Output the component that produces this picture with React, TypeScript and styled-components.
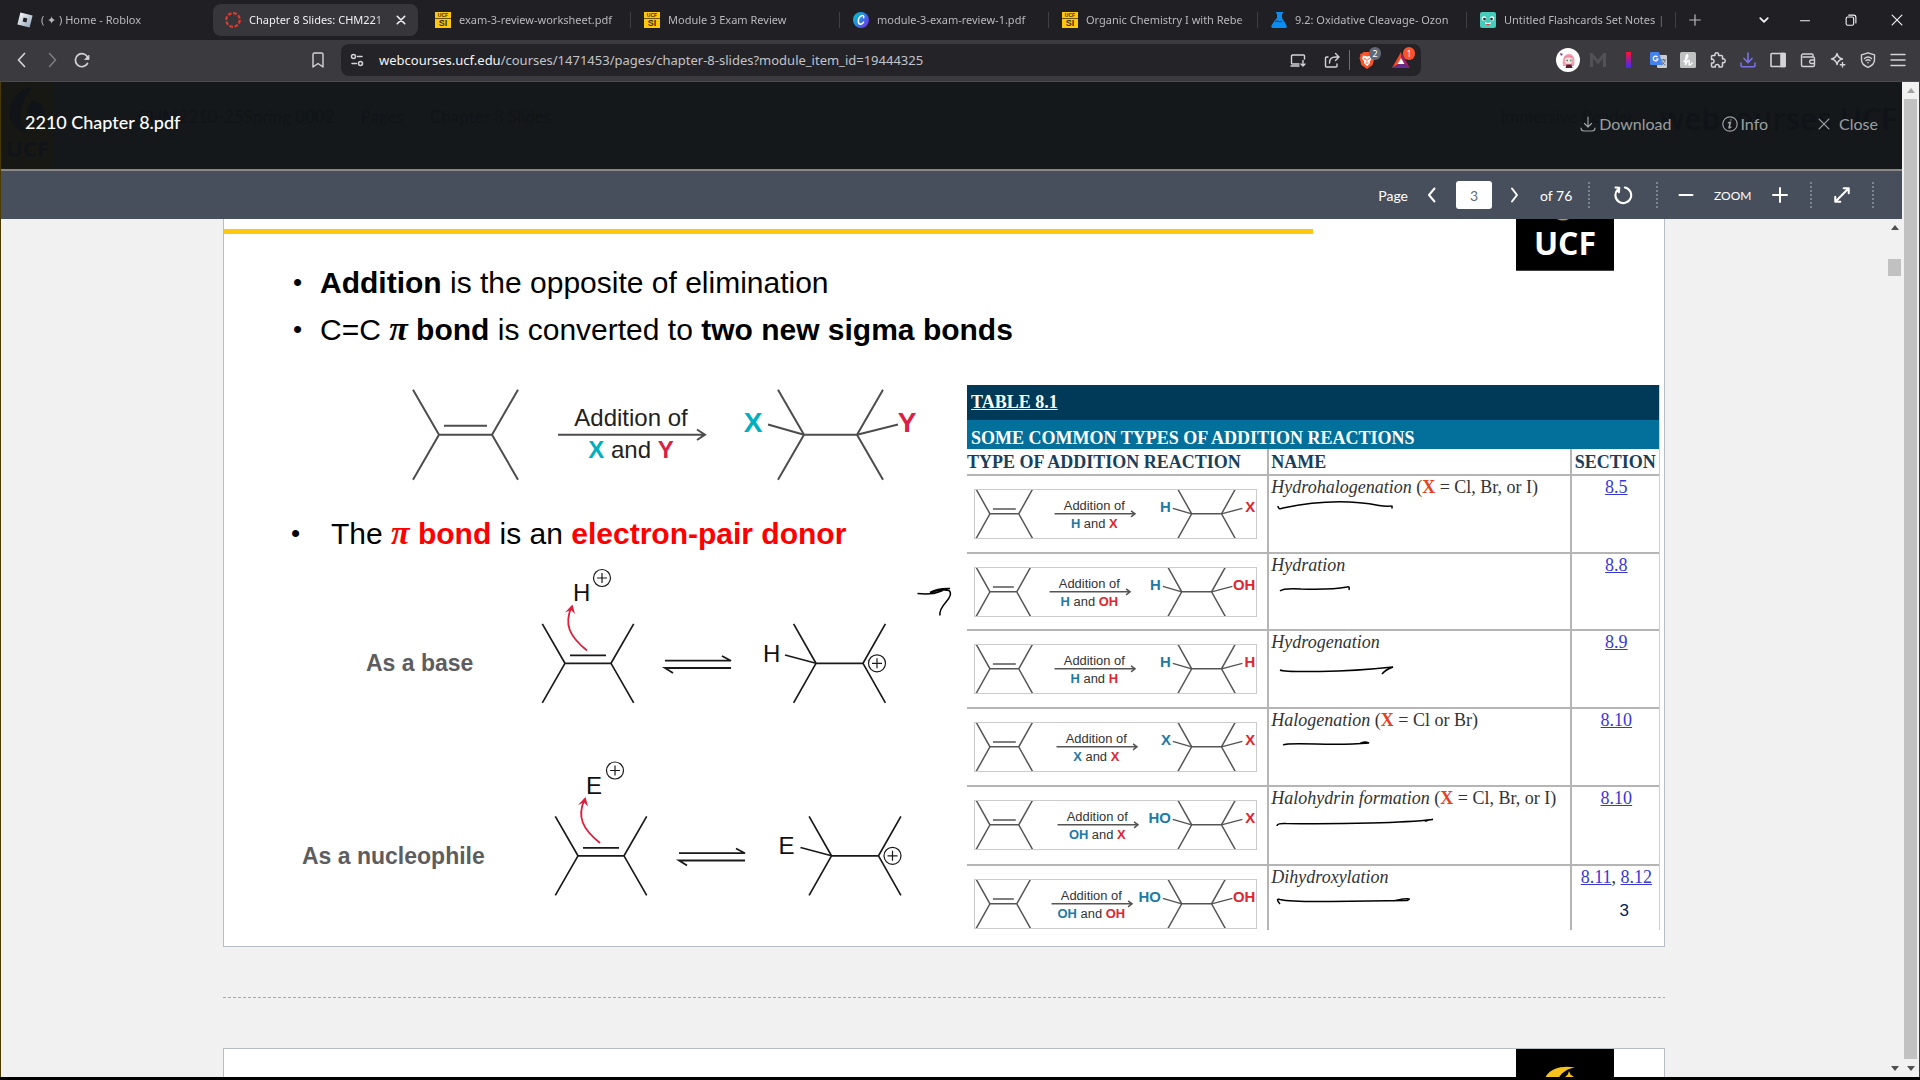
import React from "react";
import styled, { createGlobalStyle } from "styled-components";

const GlobalStyle = createGlobalStyle`
  * { box-sizing: border-box; }
  body { margin: 0; background: #000; overflow: hidden; }
  button { font: inherit; color: inherit; background: none; border: 0; padding: 0; cursor: pointer; }
  svg { display: block; flex: none; }
`;

const chromeFont = `"Noto Sans", "Open Sans", sans-serif`;
const slideFont = `"Liberation Sans", Arial, sans-serif`;
const serifFont = `"Liberation Serif", Georgia, serif`;

const Window = styled.div`
  height: 100vh;
  display: flex;
  flex-direction: column;
  font-family: ${chromeFont};
  background: #000;
`;

/* ---------- tab strip ---------- */

const TabStrip = styled.header`
  display: flex;
  align-items: center;
  flex: none;
  height: 40px;
  padding: 0 0 0 4px;
  background: #1f1f24;
  color: #b9b9bd;
  font-size: 11px;
`;

const TabSlot = styled.div<{ $line: boolean }>`
  flex: 0 1 209px;
  min-width: 0;
  padding-right: 3px;
  border-right: 1px solid ${(p) => (p.$line ? "#3f3f45" : "transparent")};
  height: 16px;
  display: flex;
  align-items: center;
`;

const TabButton = styled.button<{ $active: boolean }>`
  flex: 1;
  min-width: 0;
  height: 32px;
  padding: ${(p) => (p.$active ? "0 12px" : "0 4px 0 13px")};
  display: flex;
  align-items: center;
  gap: 8px;
  border-radius: 8px;
  text-align: left;
  background: ${(p) => (p.$active ? "#36363b" : "transparent")};
  color: ${(p) => (p.$active ? "#f1f1f3" : "#b9b9bd")};
`;

const TabTitle = styled.span`
  flex: 1;
  min-width: 0;
  white-space: nowrap;
  overflow: hidden;
  line-height: 16px;
  mask-image: linear-gradient(to right, #000 calc(100% - 12px), transparent 100%);
`;

const NewTab = styled.button`
  width: 38px;
  display: grid;
  place-items: center;
`;

const WindowControls = styled.div`
  margin-left: auto;
  display: flex;
  color: #f1f1f3;
`;

const WindowButton = styled.button<{ $w: number }>`
  width: ${(p) => p.$w}px;
  height: 40px;
  display: grid;
  place-items: center;
`;

/* ---------- navigation bar ---------- */

const NavBar = styled.nav`
  display: flex;
  align-items: center;
  flex: none;
  height: 42px;
  padding: 0 7px 1px;
  background: #3b3b3f;
  border-bottom: 1px solid #4b4a4d;
  color: #d4d4d8;
`;

const NavButton = styled.button<{ $dim?: boolean }>`
  width: 30px;
  height: 32px;
  display: grid;
  place-items: center;
  color: ${(p) => (p.$dim ? "#7d7d82" : "#d4d4d8")};
`;

const BookmarkButton = styled(NavButton)`
  margin-left: 206px;
`;

const UrlButton = styled(NavButton)`
  width: 34px;
`;

const AddressBar = styled.div`
  flex: 0 1 1080px;
  min-width: 0;
  height: 32px;
  margin-left: 8px;
  padding: 0 3px 0 8px;
  display: flex;
  align-items: center;
  border-radius: 8px;
  background: #232328;
`;

const UrlText = styled.div`
  flex: 1;
  min-width: 0;
  margin-left: 14px;
  font-size: 13px;
  line-height: 20px;
  color: #c3c4c9;
  white-space: nowrap;
  overflow: hidden;
  b { font-weight: 400; color: #f4f4f6; }
`;

const UrlDivider = styled.i`
  width: 1px;
  height: 20px;
  background: #6d6d72;
`;

const BadgeHolder = styled.button`
  position: relative;
  width: 34px;
  height: 32px;
  display: grid;
  place-items: center;
`;

const Badge = styled.span<{ $bg: string }>`
  position: absolute;
  top: 3px;
  right: 3px;
  width: 12px;
  height: 13px;
  border-radius: 6px;
  background: ${(p) => p.$bg};
  color: #fff;
  font-size: 9px;
  line-height: 13px;
  text-align: center;
`;

const Extensions = styled.div`
  margin-left: auto;
  display: flex;
`;

/* ---------- viewport ---------- */

const Viewport = styled.main`
  flex: 1;
  min-height: 0;
  display: flex;
  margin-bottom: 3px;
  border-left: 1px solid #4a3a00;
  border-right: 1px solid #3a3a3c;
  background: #f1f1f1;
`;

const Modal = styled.section`
  flex: 1;
  min-width: 0;
  display: flex;
  flex-direction: column;
`;

const ModalHeader = styled.div`
  position: relative;
  display: flex;
  align-items: center;
  flex: none;
  height: 89px;
  padding: 0 24px 4px;
  background: #14181b;
  border-bottom: 2px solid #8b8788;
  font-family: Lato, sans-serif;
`;

const Ghost = styled.div`
  position: absolute;
  inset: 0;
  display: flex;
  align-items: center;
  gap: 26px;
  padding-right: 5px;
  color: #101418;
  font-size: 17px;
  line-height: 24px;
`;

const GhostLogo = styled.div`
  width: 53px;
  height: 100%;
  margin-right: 58px;
  display: flex;
  flex-direction: column;
  align-items: center;
  justify-content: flex-end;
  gap: 2px;
  padding-bottom: 10px;
  background: #171813;
  font: 700 22px/22px "Open Sans", sans-serif;
`;

const GhostCrumb = styled.span`
  padding-bottom: 18px;
`;

const GhostBrand = styled.span`
  font: 600 30px/30px "Open Sans", sans-serif;
  padding-bottom: 14px;
`;

const GhostReader = styled(GhostCrumb)`
  margin-left: auto;
`;

const FileName = styled.h1`
  position: relative;
  margin: 0;
  font-size: 18px;
  line-height: 24px;
  font-weight: 500;
  color: #fff;
  padding-bottom: 4px;
`;

const HeaderActions = styled.div`
  position: relative;
  margin-left: auto;
  display: flex;
  gap: 50px;
  color: #9c9fa1;
  font-size: 16px;
  line-height: 20px;
`;

const HeaderAction = styled.button<{ $gap: number }>`
  display: flex;
  align-items: center;
  gap: ${(p) => p.$gap}px;
`;

const PdfToolbar = styled.div`
  flex: none;
  height: 48px;
  padding-right: 28px;
  display: flex;
  align-items: center;
  justify-content: flex-end;
  background: #484f5c;
  color: #fff;
  font-family: Lato, sans-serif;
  font-size: 14px;
`;

const ToolButton = styled.button<{ $w: number }>`
  width: ${(p) => p.$w}px;
  height: 32px;
  display: grid;
  place-items: center;
`;

const PageInput = styled.input`
  width: 36px;
  height: 28px;
  padding: 0;
  border: 0;
  border-radius: 3px;
  background: #fff;
  color: #5c6b7d;
  font: 14px Lato, sans-serif;
  text-align: center;
`;

const PageCount = styled.span`
  width: 59px;
  padding-left: 11px;
`;

const ZoomLabel = styled.span`
  width: 36px;
  font-size: 12px;
  text-align: center;
`;

const DottedLine = styled.i`
  height: 26px;
  border-left: 2px dotted #7f8590;
`;

const Reader = styled.div`
  flex: 1;
  min-height: 0;
  display: flex;
`;

const Pages = styled.div`
  flex: 1;
  min-width: 0;
  overflow: hidden;
`;

const PageSheet = styled.article<{ $first?: boolean }>`
  position: relative;
  max-width: 1442px;
  margin: 0 auto;
  border: 1px solid #b7bcc5;
  border-top-width: ${(p) => (p.$first ? 0 : 1)}px;
  background: #fff;
  padding-bottom: 16px;
  font-family: ${slideFont};
`;

const PageBreak = styled.hr`
  max-width: 1442px;
  height: 1px;
  margin: 50px auto;
  border: 0;
  background: repeating-linear-gradient(to right, #a8a8a8 0 3px, transparent 3px 5px);
`;

const SlideTop = styled.div`
  display: flex;
  align-items: flex-start;
  justify-content: space-between;
  padding-right: 50px;
`;

const SlideIntro = styled.div`
  width: 1089px;
  padding-bottom: 32px;
`;

const GoldRule = styled.div`
  height: 5px;
  margin: 10px 0 25px;
  background: #ffc80f;
`;

const LogoBox = styled.div`
  position: relative;
  width: 98px;
  height: 52px;
  background: #000;
  border-bottom: 1px solid #444;
  color: #fff;
  font: 700 32px/47px "Open Sans", sans-serif;
  text-align: center;
  overflow: hidden;
`;

const LogoGlint = styled.svg`
  position: absolute;
  top: 0;
  left: 0;
`;

const Bullets = styled.ul<{ $dot: number; $gap: number }>`
  margin: 0;
  padding: 0 0 0 ${(p) => p.$dot}px;
  list-style: none;
  font-size: 30px;
  line-height: 47px;
  color: #000;
  white-space: nowrap;
  li { display: flex; height: 47px; white-space: pre; }
  li::before { content: "•"; width: ${(p) => p.$gap}px; font-size: 26px; }
`;

const Pi = styled.i`
  font-family: ${serifFont};
  font-weight: 700;
  font-size: 34px;
  line-height: 1;
`;

const Red = styled.b`
  color: #fe0000;
`;

const SlideBody = styled.div`
  display: grid;
  grid-template-columns: 743fr 693fr;
  padding-right: 4px;
`;

const Figure = styled.svg`
  width: 100%;
  height: auto;
`;

/* ---------- reaction table ---------- */

const ReactionTable = styled.table`
  width: 100%;
  table-layout: fixed;
  border-collapse: separate;
  border-spacing: 0;
  font-family: ${serifFont};
  font-size: 18px;
  line-height: 22px;
  color: #333;
  border-right: 1px solid #cfcfcf;
`;

const Band = styled.th<{ $bg: string; $h: number }>`
  height: ${(p) => p.$h}px;
  padding: 0 4px;
  background: ${(p) => p.$bg};
  color: #fff;
  text-align: left;
  vertical-align: bottom;
`;

const TitleLink = styled.a`
  display: block;
  padding-bottom: 7px;
  color: #fff;
`;

const ColHead = styled.th<{ $center?: boolean }>`
  height: 27px;
  padding: ${(p) => (p.$center ? "0" : "0 0 0 2px")};
  border-bottom: 2px solid #b5b5b5;
  color: #17405c;
  text-align: ${(p) => (p.$center ? "center" : "left")};
  white-space: nowrap;
  &:first-child { padding: 0; }
  & + & { border-left: 2px solid #b5b5b5; }
`;

const Cell = styled.td<{ $h: number; $center?: boolean }>`
  height: ${(p) => p.$h}px;
  padding: 0 0 0 2px;
  vertical-align: top;
  border-bottom: 2px solid #b5b5b5;
  text-align: ${(p) => (p.$center ? "center" : "left")};
  white-space: nowrap;
  & + & { border-left: 2px solid #b5b5b5; }
  tr:last-child & { border-bottom: 0; }
  a { color: #3737d8; }
`;

const SchemeCell = styled(Cell)`
  padding: 13px 10px 0 7px;
`;

const XMark = styled.b`
  color: #e8401f;
`;

const Scheme = styled.svg`
  width: 100%;
  height: auto;
  border: 1px solid #cbcbcb;
`;

const Ink = styled.svg`
  overflow: visible;
  fill: none;
  stroke: #000;
  stroke-width: 1.5;
`;

const SlideNumber = styled.span`
  position: absolute;
  right: 35px;
  bottom: 25px;
  font-size: 17px;
  line-height: 20px;
  color: #00215f;
`;

/* ---------- scrollbars ---------- */

const ScrollTrack = styled.div<{ $w: number }>`
  width: ${(p) => p.$w}px;
  flex: none;
  display: flex;
  flex-direction: column;
  align-items: center;
  justify-content: space-between;
  padding: 6px 2px;
  background: #f1f1f1;
`;

const ThumbSpace = styled.div<{ $lead: number }>`
  flex: 1;
  width: 13px;
  display: flex;
  flex-direction: column;
  padding: ${(p) => p.$lead}px 0 7px;
`;

const Thumb = styled.div<{ $h?: number }>`
  flex: ${(p) => (p.$h ? `0 0 ${p.$h}px` : "1")};
  background: #c1c1c1;
`;

function Triangle({ down, dim }: { down?: boolean; dim?: boolean }) {
  return (
    <svg width="8" height="5" viewBox="0 0 8 5">
      <path d={down ? "M0 0h8L4 5z" : "M0 5h8L4 0z"} fill={dim ? "#a3a3a3" : "#505050"} />
    </svg>
  );
}

/* ---------- icons ---------- */

type IconProps = { size?: number; w?: number; children: React.ReactNode };
function Icon({ size = 16, w = 1.4, children }: IconProps) {
  return (
    <svg width={size} height={size} viewBox="0 0 16 16" fill="none" stroke="currentColor" strokeWidth={w} strokeLinecap="round" strokeLinejoin="round" aria-hidden="true">
      {children}
    </svg>
  );
}

const RobloxIcon = () => (
  <svg width="16" height="16" viewBox="0 0 16 16">
    <defs>
      <linearGradient id="rbx" x1="0" y1="0" x2="1" y2="1">
        <stop offset="0" stopColor="#fff" />
        <stop offset="1" stopColor="#8ba0b5" />
      </linearGradient>
    </defs>
    <path d="M3.4 0.4 15.6 3.4 12.6 15.6 0.4 12.6z" fill="url(#rbx)" />
    <path d="M6.6 5.6 10.4 6.6 9.4 10.4 5.6 9.4z" fill="#1f1f24" />
  </svg>
);

const CanvasIcon = () => (
  <svg width="16" height="16" viewBox="0 0 16 16" fill="none" stroke="#e23a2e">
    <circle cx="8" cy="8" r="6.8" strokeWidth="2.2" strokeDasharray="3.6 1.74" />
  </svg>
);

const SiBox = styled.span`
  width: 16px;
  height: 16px;
  flex: none;
  display: flex;
  flex-direction: column;
  align-items: center;
  background: #ffc709;
  color: #3a2d00;
  font: 700 9px/9px "Liberation Sans", sans-serif;
  small { font-size: 5px; line-height: 6px; width: 100%; text-align: center; border-bottom: 1px solid #6b5300; }
`;
const SiIcon = () => (
  <SiBox>
    <small>UCF</small>SI
  </SiBox>
);

const CanvaIcon = () => (
  <svg width="16" height="16" viewBox="0 0 16 16">
    <defs>
      <linearGradient id="cnv" x1="0" y1="0.2" x2="1" y2="0.9">
        <stop offset="0" stopColor="#00c4cc" />
        <stop offset="0.5" stopColor="#3478e6" />
        <stop offset="1" stopColor="#7d2ae8" />
      </linearGradient>
    </defs>
    <circle cx="8" cy="8" r="8" fill="url(#cnv)" />
    <path d="M10.6 5.6c.5-1.2-.2-2.2-1.4-2.1C7 3.7 5.3 6.5 5.3 9c0 2 .9 3.2 2.3 3.2 1.2 0 2.3-.8 3-2" fill="none" stroke="#fff" strokeWidth="1.5" strokeLinecap="round" />
  </svg>
);

const FlaskIcon = () => (
  <svg width="16" height="16" viewBox="0 0 16 16" fill="#0b8df0">
    <path d="M5 0h7v1.6h-1V6l4.300 7c1 1.700.2 3-1.300 3H2C.5 16-.3 14.700.700 13.200L3.600 8.500 6 6V1.600H5z" />
    <path d="M4 9.500c2-1.500 4 1 7 0" stroke="#1f1f24" strokeWidth=".8" fill="none" />
  </svg>
);

const FlashIcon = () => (
  <svg width="16" height="16" viewBox="0 0 16 16">
    <rect width="16" height="16" rx="2" fill="#45cdbb" />
    <circle cx="4" cy="6.500" r="2.200" fill="#fff" />
    <circle cx="12" cy="6.500" r="2.200" fill="#fff" />
    <circle cx="4.500" cy="7" r="1.300" fill="#222" />
    <circle cx="11.500" cy="7" r="1.300" fill="#222" />
    <path d="M5 10c1.500 1.200 4.500 1.200 6 0-.3 4.500-5.700 4.500-6 0z" fill="#fff" />
    <path d="M6 12h4c-.6 2-3.400 2-4 0z" fill="#e03a3a" />
  </svg>
);

const tabs = [
  { title: "( ✦ ) Home - Roblox", icon: <RobloxIcon /> },
  { title: "Chapter 8 Slides: CHM221", icon: <CanvasIcon />, active: true },
  { title: "exam-3-review-worksheet.pdf", icon: <SiIcon />, line: true },
  { title: "Module 3 Exam Review", icon: <SiIcon />, line: true },
  { title: "module-3-exam-review-1.pdf", icon: <CanvaIcon />, line: true },
  { title: "Organic Chemistry I with Rebe", icon: <SiIcon />, line: true },
  { title: "9.2: Oxidative Cleavage- Ozon", icon: <FlaskIcon />, line: true },
  { title: "Untitled Flashcards Set Notes |", icon: <FlashIcon />, line: true },
];

function BrowserTabs() {
  return (
    <TabStrip>
      {tabs.map((t, i) => (
        <TabSlot key={i} $line={!!t.line}>
          <TabButton $active={!!t.active}>
            {t.icon}
            <TabTitle>{t.title}</TabTitle>
            {t.active && (
              <Icon size={10} w={2.6}>
                <path d="M2 2l12 12M14 2 2 14" />
              </Icon>
            )}
          </TabButton>
        </TabSlot>
      ))}
      <NewTab aria-label="New tab">
        <Icon size={12} w={1.6}>
          <path d="M8 1v14M1 8h14" />
        </Icon>
      </NewTab>
      <WindowControls>
        <WindowButton $w={36} aria-label="Search tabs">
          <Icon size={12} w={2.4}>
            <path d="M3 5.500l5 5 5-5" />
          </Icon>
        </WindowButton>
        <WindowButton $w={46} aria-label="Minimize">
          <Icon size={12} w={1.5}>
            <path d="M2 9h12" />
          </Icon>
        </WindowButton>
        <WindowButton $w={46} aria-label="Restore">
          <Icon size={12} w={1.5}>
            <rect x="1.500" y="4" width="10" height="11" rx="2" />
            <path d="M5 1.500h6.500a3 3 0 0 1 3 3V12" />
          </Icon>
        </WindowButton>
        <WindowButton $w={46} aria-label="Close window">
          <Icon size={12} w={1.6}>
            <path d="M1.500 1.500l13 13M14.500 1.500l-13 13" />
          </Icon>
        </WindowButton>
      </WindowControls>
    </TabStrip>
  );
}

function BrowserNav() {
  return (
    <NavBar>
      <NavButton aria-label="Back">
        <Icon w={1.7}><path d="M10.500 1.500 4.500 8l6 6.500" /></Icon>
      </NavButton>
      <NavButton $dim aria-label="Forward">
        <Icon w={1.5}><path d="M5.500 1.500l6 6.500-6 6.500" /></Icon>
      </NavButton>
      <NavButton aria-label="Reload">
        <Icon w={1.7}>
          <path d="M13.500 11.500A6.500 6.500 0 1 1 14 6" />
          <path d="M15 3.500V7.500H11z" fill="currentColor" strokeWidth=".8" />
        </Icon>
      </NavButton>
      <BookmarkButton aria-label="Bookmark">
        <Icon><path d="M3 2.500C3 1.500 3.500 1 4.500 1h7c1 0 1.500.5 1.500 1.500V15l-5-3.500L3 15z" /></Icon>
      </BookmarkButton>
      <AddressBar>
        <Icon w={1.5}>
          <circle cx="4.500" cy="4.500" r="2" />
          <path d="M8.500 4.500H13M3 11.500h4.500" />
          <circle cx="11.500" cy="11.500" r="2" />
        </Icon>
        <UrlText>
          <b>webcourses.ucf.edu</b>/courses/1471453/pages/chapter-8-slides?module_item_id=19444325
        </UrlText>
        <UrlButton aria-label="Install">
          <Icon><path d="M9 12H2.500a1 1 0 0 1-1-1V4a1 1 0 0 1 1-1h11a1 1 0 0 1 1 1v3M1 14h8M13 8.500V14M11 12l2 2 2-2" /></Icon>
        </UrlButton>
        <UrlButton aria-label="Share">
          <Icon><path d="M4 5H2.500a1 1 0 0 0-1 1v8a1 1 0 0 0 1 1h9.500a1 1 0 0 0 1-1v-2M5.500 11c0-4 2-6 6-6H15M11.500 1.500 15 5l-3.500 3.500" /></Icon>
        </UrlButton>
        <UrlDivider />
        <BadgeHolder aria-label="Shields">
          <svg width="16" height="18" viewBox="0 0 16 18">
            <path d="M4.500 1h7l1.500 1.500 2 .5-.5 2L15.500 7l-2 7L8 18l-5.500-4-2-7L1.500 5 1 3l2-.5z" fill="#fb542b" />
            <path d="M4 4.500 8 5.500l4-1 .8 3-2 3 .2 1.800L8 15l-3-2.700.2-1.800-2-3z" fill="#fff" />
            <path d="M5 7.500l2 .8M11 7.500l-2 .8M8 8v2.500M6.500 12h3" stroke="#fb542b" strokeWidth="1" />
          </svg>
          <Badge $bg="#636875">2</Badge>
        </BadgeHolder>
        <BadgeHolder aria-label="Rewards">
          <svg width="18" height="16" viewBox="0 0 18 16">
            <path d="M9 0 0 16 9 10.500z" fill="#ff4724" />
            <path d="M9 0l9 16-9-5.500z" fill="#9e1f63" />
            <path d="M0 16h18l-9-5.500z" fill="#662d91" />
            <path d="M9 6l3.500 6h-7z" fill="#fff" />
          </svg>
          <Badge $bg="#fb542b">1</Badge>
        </BadgeHolder>
      </AddressBar>
      <Extensions>
        <NavButton aria-label="Profile">
          <svg width="24" height="24" viewBox="0 0 24 24">
            <circle cx="12" cy="12" r="12" fill="#fff" />
            <path d="M7 18c-1-5 0-12 6-12s6 7 5 12z" fill="#f2a0b5" />
            <circle cx="12.500" cy="12.500" r="3.500" fill="#fbe3dc" />
            <path d="M8 10c1-3 7-4 9 0-3-1-6-1-9 0z" fill="#ec86a2" />
            <path d="M10.500 12.500h1.500M14 12.500h1.500" stroke="#2f8f6c" strokeWidth="1.500" />
            <path d="M9.500 20l1-3.500h5l1 3.500z" fill="#5b2030" />
            <path d="M4 5l3 1-2 2z" fill="#7a2b8f" />
          </svg>
        </NavButton>
        <NavButton aria-label="Extension M">
          <svg width="16" height="14" viewBox="0 0 16 14"><path d="M1.500 14V1.500L8 9l6.500-7.500V14" fill="none" stroke="#515156" strokeWidth="3" /></svg>
        </NavButton>
        <NavButton aria-label="Color bar">
          <svg width="5" height="16" viewBox="0 0 5 16">
            <defs><linearGradient id="bar" x1="0" y1="0" x2="0" y2="1"><stop offset="0" stopColor="#ff1230" /><stop offset="1" stopColor="#3c2bff" /></linearGradient></defs>
            <rect width="5" height="16" fill="url(#bar)" />
          </svg>
        </NavButton>
        <NavButton aria-label="Translate">
          <svg width="17" height="16" viewBox="0 0 17 16">
            <rect x="7" y="3" width="10" height="13" rx="1" fill="#c9ccd1" />
            <path d="M11 8h5M13.500 7v1M15 8c-.5 2.500-2 4-3.500 5M12 9.500c.5 1.500 2 3 3.500 3.500" stroke="#5c6b80" fill="none" />
            <path d="M1 0h8l3.500 13H1a1 1 0 0 1-1-1V1a1 1 0 0 1 1-1z" fill="#4482ee" />
            <path d="M7.500 5A2.400 2.400 0 1 0 8 7H5.800" stroke="#fff" strokeWidth="1.200" fill="none" />
          </svg>
        </NavButton>
        <NavButton aria-label="Coupons">
          <svg width="16" height="16" viewBox="0 0 16 16">
            <rect width="16" height="16" rx="1.500" fill="#c0c1c3" />
            <path d="M4 9.500C6.500 8 8.500 4.500 7.500 3S5.500 6 5.500 13c.8-3 2.300-5 3.500-4.500S8 12.500 9.500 13c1.200.2 2-1 2.500-2" fill="none" stroke="#fff" strokeWidth="1.500" strokeLinecap="round" />
          </svg>
        </NavButton>
        <NavButton aria-label="Extensions">
          <Icon w={1.5}><path d="M1.500 4.500a1 1 0 0 1 1-1H5C4.500 1.500 5.500.8 6.800.8S9 1.500 8.500 3.500H11.500a1 1 0 0 1 1 1V7c2-.5 2.700.5 2.700 1.800s-.7 2.200-2.700 1.700v3.500a1 1 0 0 1-1 1H9c.4-2-.6-2.500-1.800-2.500S5 13 5.300 15H2.500a1 1 0 0 1-1-1v-3c2 .3 2.500-.7 2.500-1.800S3.500 7 1.500 7.500z" /></Icon>
        </NavButton>
        <NavButton aria-label="Downloads">
          <svg width="16" height="16" viewBox="0 0 16 16" fill="none" stroke="#7b72e8" strokeWidth="1.600" strokeLinecap="round"><path d="M8 1v9M4 6.500 8 10.500l4-4M1 11v2.500c0 .8.500 1.300 1.300 1.300h11.400c.8 0 1.300-.5 1.300-1.300V11" /></svg>
        </NavButton>
        <NavButton aria-label="Sidebar">
          <Icon w={1.6}><rect x="1" y="1.500" width="14" height="13" rx=".8" /><path d="M11 1.500h4v13h-4z" fill="currentColor" /></Icon>
        </NavButton>
        <NavButton aria-label="Wallet">
          <Icon><path d="M13 5V3a1 1 0 0 0-1-1H3a2 2 0 0 0-1.500 1.500V13A1.500 1.500 0 0 0 3 14.500h10a1.500 1.500 0 0 0 1.500-1.500V6.500A1.500 1.500 0 0 0 13 5H3M14.500 8H11a1.800 1.800 0 0 0 0 3.500h3.500" /></Icon>
        </NavButton>
        <NavButton aria-label="Assistant">
          <Icon><path d="M7 1.500c.7 3.500 2 4.800 5.500 5.500C9 7.700 7.700 9 7 12.500 6.300 9 5 7.700 1.500 7 5 6.300 6.300 5 7 1.500zM12.500 10.500v4.500M10.300 12.800h4.500" /></Icon>
        </NavButton>
        <NavButton aria-label="VPN">
          <Icon><path d="M8 .8l6.500 2v5c0 3.500-2.500 6-6.500 7.500C4 13.800 1.500 11.300 1.500 7.800v-5zM4.500 6.500c2-1.700 5-1.700 7 0M6 8.500c1.300-1 2.700-1 4 0M8 10.500v.2" /></Icon>
        </NavButton>
        <NavButton aria-label="Menu">
          <Icon w={1.5}><path d="M1 2.500h14M1 8h14M1 13.500h14" /></Icon>
        </NavButton>
      </Extensions>
    </NavBar>
  );
}

/* ---------- slide drawings ---------- */

type Tetra = { x1: number; x2: number; y: number; spread: number; rise: number; single?: boolean; inset?: number };
function Skeleton({ x1, x2, y, spread, rise, single, inset = 5 }: Tetra) {
  const d = `M${x1 - spread} ${y - rise}L${x1} ${y}L${x1 - spread} ${y + rise}M${x2 + spread} ${y - rise}L${x2} ${y}L${x2 + spread} ${y + rise}M${x1} ${y}H${x2}`;
  return <path d={single ? d : `${d}M${x1 + inset} ${y - rise / 5}H${x2 - inset}`} />;
}

function AdditionScheme() {
  return (
    <Figure viewBox="224 386 743 125" role="img" aria-label="Addition of X and Y">
      <g fill="none" stroke="#4d4d4d" strokeWidth="2">
        <Skeleton x1={439} x2={492} y={435.7} spread={26} rise={45} />
        <Skeleton x1={804} x2={857} y={435.7} spread={26} rise={45} single />
        <path d="M804 435.700 768 425.500M857 435.700 898 425.500" />
        <path d="M558 435.700H704M697 430.500L705 435.700 697 441" />
      </g>
      <g fontFamily={slideFont} fontSize="24" textAnchor="middle" fill="#222">
        <text x="631" y="427">Addition of</text>
        <text x="631" y="459">
          <tspan fill="#00b0bf" fontWeight="700">X</tspan> and <tspan fill="#dc2044" fontWeight="700">Y</tspan>
        </text>
        <g fontWeight="700" fontSize="28">
          <text x="753" y="433" fill="#00b0bf">X</text>
          <text x="907" y="433" fill="#dc2044">Y</text>
        </g>
      </g>
    </Figure>
  );
}

function Cation({ x, y }: { x: number; y: number }) {
  return (
    <path d={`M${x - 8.5} ${y}a8.500 8.500 0 1 0 17 0a8.500 8.500 0 1 0 -17 0M${x - 5} ${y}h10M${x} ${y - 5}v10`} strokeWidth="1.200" />
  );
}

type MechProps = { label: string; labelX: number; atom: string; dy: number; a: number; b: number; c: number };
function Mechanism({ label, labelX, atom, dy, a, b, c }: MechProps) {
  return (
    <g transform={`translate(0 ${dy})`}>
      <text x={labelX} y="673" fontSize="23" fontWeight="700" fill="#5d5d5f">{label}</text>
      <g transform={`translate(${a} 0)`}>
        <text x="573" y="603" fontSize="24" fill="#111">{atom}</text>
        <g fill="none" stroke="#1a1a1a" strokeWidth="1.700">
          <Cation x={602} y={580} />
          <Skeleton x1={565} x2={611} y={665.3} spread={22.7} rise={39.5} />
        </g>
        <path d="M587 652.500C569 638 564 626 571.500 609" fill="none" stroke="#dd1f3c" strokeWidth="1.800" />
        <path d="M572.500 606.500 565 614.500 571 612 575 616z" fill="#dd1f3c" />
      </g>
      <path transform={`translate(${b} 0)`} d="M665 662.700H731L722 658M731 670H665L673 675" fill="none" stroke="#1a1a1a" strokeWidth="1.800" />
      <g transform={`translate(${c} 0)`}>
        <text x="763" y="663.500" fontSize="24" fill="#111">{atom}</text>
        <g fill="none" stroke="#1a1a1a" strokeWidth="1.700">
          <Skeleton x1={816} x2={863} y={665.3} spread={22.4} rise={39.5} single />
          <path d="M816 665.300 785 657" />
          <Cation x={877} y={665.3} />
        </g>
      </g>
    </g>
  );
}

function MechanismFigure() {
  return (
    <Figure viewBox="224 559 743 373" role="img" aria-label="Pi bond as a base and as a nucleophile" fontFamily={slideFont}>
      <Mechanism label="As a base" labelX={366} atom="H" dy={0} a={0} b={0} c={0} />
      <Mechanism label="As a nucleophile" labelX={302} atom="E" dy={192.5} a={13} b={14} c={15.5} />
      <path d="M917.500 595.500Q932 597 940 593.500T950 590.500Q938 590 930 594.500 942 591 949 592.500 953 596 946 604 939 612 940 617.500" fill="none" stroke="#000" strokeWidth="1.500" />
    </Figure>
  );
}

type RowData = {
  left: string;
  right: string;
  cx: number;
  name: string;
  tail?: [string, string];
  links: string[];
  h: number;
  ink: string;
};

const rows: RowData[] = [
  { left: "H", right: "X", cx: 120, name: "Hydrohalogenation", tail: ["(", " = Cl, Br, or I)"], links: ["8.5"], h: 78, ink: "M7 7q0 4 5 2C50 1 80 1 108 6.500 116 8 121 7 121 6.500v3" },
  { left: "H", right: "OH", cx: 115, name: "Hydration", links: ["8.8"], h: 77, ink: "M9 14Q12 11 30 12 60 13 76 10q3-1 2 3" },
  { left: "H", right: "H", cx: 120, name: "Hydrogenation", links: ["8.9"], h: 78, ink: "M9 16q4 2 40 1.500T122 13Q114 16 111 20" },
  { left: "X", right: "X", cx: 122, name: "Halogenation", tail: ["(", " = Cl or Br)"], links: ["8.10"], h: 78, ink: "M12 13Q15 11 45 12T98 11q-5-2-9 .5" },
  { left: "OH", right: "X", cx: 123, name: "Halohydrin formation", tail: ["(", " = Cl, Br, or I)"], links: ["8.10"], h: 79, ink: "M6 16q0-3 9-2.500Q60 14 100 13T162 9.500q-5 0-8 2" },
  { left: "OH", right: "OH", cx: 117, name: "Dihydroxylation", links: ["8.11", "8.12"], h: 64, ink: "M9 15q-5-6 0-4.500Q20 13 60 12.500T136 11.500Q142 9 132 10L122 12" },
];

function ReactionScheme({ left, right, cx }: RowData) {
  const s = right === "OH" ? -10 : 0;
  return (
    <Scheme viewBox="0 1 283 48" role="img" aria-label={`Addition of ${left} and ${right}`}>
      <g fill="none" stroke="#555" strokeWidth="1.500">
        <Skeleton x1={15} x2={s ? 42 : 44} y={25} spread={14} rise={25} inset={3} />
        <Skeleton x1={218 + s} x2={248 + s} y={25} spread={14} rise={25} single />
        <path d={`M${218 + s} 25l-19-5.500M${248 + s} 25l21-5.500M${cx - 40} 25h81M${cx + 37} 22l4 3-4 3`} />
      </g>
      <g fontFamily={slideFont} fontSize="13" fill="#333" textAnchor="middle">
        <text x={cx} y="21">Addition of</text>
        <text x={cx} y="39">
          <tspan fill="#1b7aa6" fontWeight="700">{left}</tspan> and <tspan fill="#e02430" fontWeight="700">{right}</tspan>
        </text>
      </g>
      <g fontFamily={slideFont} fontSize="15" fontWeight="700" textAnchor="end">
        <text x={197 + s} y="23" fill="#1b7aa6">{left === "OH" ? "HO" : left}</text>
        <text x="282" y="23" fill="#e02430">{right}</text>
      </g>
    </Scheme>
  );
}

function AdditionTable() {
  return (
    <ReactionTable>
      <colgroup>
        <col style={{ width: "43.4%" }} />
        <col style={{ width: "43.7%" }} />
        <col />
      </colgroup>
      <thead>
        <tr>
          <Band colSpan={3} $bg="#003a58" $h={35}>
            <TitleLink href="#table-8-1">TABLE 8.1</TitleLink>
          </Band>
        </tr>
        <tr>
          <Band colSpan={3} $bg="#03709c" $h={29}>SOME COMMON TYPES OF ADDITION REACTIONS</Band>
        </tr>
        <tr>
          <ColHead>TYPE OF ADDITION REACTION</ColHead>
          <ColHead>NAME</ColHead>
          <ColHead $center>SECTION</ColHead>
        </tr>
      </thead>
      <tbody>
        {rows.map((r) => (
          <tr key={r.name}>
            <SchemeCell $h={r.h}>
              <ReactionScheme {...r} />
            </SchemeCell>
            <Cell $h={r.h}>
              <i>{r.name}</i>
              {r.tail && (
                <>
                  {" "}{r.tail[0]}<XMark>X</XMark>{r.tail[1]}
                </>
              )}
              <Ink width="180" height="24" viewBox="0 0 180 24"><path d={r.ink} transform="translate(0 1)" /></Ink>
            </Cell>
            <Cell $h={r.h} $center>
              {r.links.map((l, i) => (
                <React.Fragment key={l}>
                  {i > 0 && ", "}
                  <a href={`#section-${l}`}>{l}</a>
                </React.Fragment>
              ))}
            </Cell>
          </tr>
        ))}
      </tbody>
    </ReactionTable>
  );
}

function Slide() {
  return (
    <PageSheet $first>
      <SlideTop>
        <SlideIntro>
          <GoldRule />
          <Bullets $dot={69} $gap={27}>
            <li><span><b>Addition</b> is the opposite of elimination</span></li>
            <li><span>C=C <Pi>π</Pi><b> bond</b> is converted to <b>two new sigma bonds</b></span></li>
          </Bullets>
        </SlideIntro>
        <LogoBox>
          UCF
          <LogoGlint width="98" height="3" viewBox="0 0 98 3"><path d="M41 0h12q-6 3-12 0z" fill="#b8962a" /></LogoGlint>
        </LogoBox>
      </SlideTop>
      <SlideBody>
        <div>
          <AdditionScheme />
          <Bullets $dot={67} $gap={40}>
            <li><span>The <Red><Pi>π</Pi> bond</Red> is an <Red>electron-pair donor</Red></span></li>
          </Bullets>
          <MechanismFigure />
        </div>
        <AdditionTable />
      </SlideBody>
      <SlideNumber>3</SlideNumber>
    </PageSheet>
  );
}

function NextSlide() {
  return (
    <PageSheet>
      <SlideTop>
        <SlideIntro />
        <LogoBox>
          <LogoGlint width="98" height="51" viewBox="0 0 98 51">
            <path d="M30 27C36 19 46 16.500 59 18.500 51 20 46 23 42 30H30z" fill="#f6c21c" />
            <path d="M53 22l1.500 3.500L58 28H49l2.800-2.500z" fill="#f6c21c" />
          </LogoGlint>
        </LogoBox>
      </SlideTop>
    </PageSheet>
  );
}

export default function App() {
  return (
    <Window>
      <GlobalStyle />
      <BrowserTabs />
      <BrowserNav />
      <Viewport>
        <Modal>
          <ModalHeader>
            <Ghost aria-hidden="true">
              <GhostLogo>
                <svg width="40" height="50" viewBox="0 0 40 50"><path d="M25 2C8 5 0 18 2 32c2 9 8 15 18 16C10 38 8 22 25 2zM24 16c10 0 14 8 12 16-5-4-9-2-10 6-8-6-10-14-2-22z" fill="#101418" /></svg>
                UCF
              </GhostLogo>
              <GhostCrumb>CHM2210-25Spring 0002</GhostCrumb>
              <GhostCrumb>Pages</GhostCrumb>
              <GhostCrumb>Chapter 8 Slides</GhostCrumb>
              <GhostReader>Immersive Reader</GhostReader>
              <GhostBrand>webcourses UCF</GhostBrand>
            </Ghost>
            <FileName>2210 Chapter 8.pdf</FileName>
            <HeaderActions>
              <HeaderAction $gap={3}>
                <Icon w={1.2}><path d="M8 1v10M4.500 7.500 8 11l3.500-3.500M1 12c0 2 1 3 3 3h8c2 0 3-1 3-3" /></Icon>
                Download
              </HeaderAction>
              <HeaderAction $gap={3}>
                <Icon w={1.2}>
                  <circle cx="8" cy="8" r="7.200" />
                  <path d="M6.500 6.800 8.500 6.300 7 11.500q0 1 1.800-.3M8.900 3.900v.2" strokeWidth="1.500" />
                </Icon>
                Info
              </HeaderAction>
              <HeaderAction $gap={9}>
                <Icon size={12} w={1.7}><path d="M1.500 1.500l13 13M14.500 1.500l-13 13" /></Icon>
                Close
              </HeaderAction>
            </HeaderActions>
          </ModalHeader>
          <PdfToolbar>
            <label htmlFor="page-number">Page</label>
            <ToolButton $w={48} aria-label="Previous page">
              <Icon w={2}><path d="M10.500 1.500 5 8l5.500 6.500" /></Icon>
            </ToolButton>
            <PageInput id="page-number" defaultValue="3" />
            <ToolButton $w={37} aria-label="Next page">
              <Icon w={2}><path d="M9 1.500 14 8l-5 6.500" /></Icon>
            </ToolButton>
            <PageCount>of 76</PageCount>
            <DottedLine />
            <ToolButton $w={66} aria-label="Rotate">
              <Icon size={20} w={1.7}><path d="M9.500 2A6.300 6.300 0 1 1 4 3.500M2 2l3 .2-.3 3.600" /></Icon>
            </ToolButton>
            <DottedLine />
            <ToolButton $w={56} aria-label="Zoom out">
              <Icon w={2}><path d="M1.500 8h13" /></Icon>
            </ToolButton>
            <ZoomLabel>ZOOM</ZoomLabel>
            <ToolButton $w={60} aria-label="Zoom in">
              <Icon w={2}><path d="M1 8h14M8 1v14" /></Icon>
            </ToolButton>
            <DottedLine />
            <ToolButton $w={60} aria-label="Full screen">
              <Icon size={18} w={1.8}><path d="M2.500 13.500l11-11M9.500 2h4.500v4.500M2 9.500V14h4.500" /></Icon>
            </ToolButton>
            <DottedLine />
          </PdfToolbar>
          <Reader>
            <Pages>
              <Slide />
              <PageBreak />
              <NextSlide />
            </Pages>
            <ScrollTrack $w={15}>
              <Triangle />
              <ThumbSpace $lead={29}><Thumb $h={17} /></ThumbSpace>
              <Triangle down />
            </ScrollTrack>
          </Reader>
        </Modal>
        <ScrollTrack $w={17}>
          <Triangle dim />
          <ThumbSpace $lead={6}><Thumb /></ThumbSpace>
          <Triangle down />
        </ScrollTrack>
      </Viewport>
    </Window>
  );
}
